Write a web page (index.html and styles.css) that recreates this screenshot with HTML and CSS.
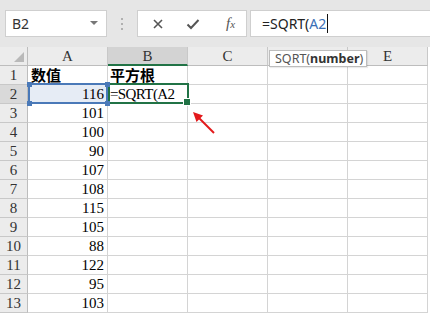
FILE: index.html
```html
<!DOCTYPE html>
<html lang="zh-CN">
<head>
  <meta charset="UTF-8">
  <title>SQRT</title>
  <link rel="stylesheet" href="styles.css">
</head>
<body>

  <div class="formula-bar">
    <div class="name-box">
      <span>B2</span>
      <span class="caret"></span>
    </div>
    <div class="grip"><i></i><i></i><i></i></div>
    <div class="btn-box">
      <svg class="icon" width="12" height="12" viewBox="0 0 12 12"><path d="M2 2 L10 10 M10 2 L2 10" stroke="#555" stroke-width="1.6" fill="none"/></svg>
      <svg class="icon" width="14" height="12" viewBox="0 0 14 12"><path d="M1.5 6.5 L5 10 L12.5 2" stroke="#555" stroke-width="2" fill="none"/></svg>
      <span class="fx">f<small>x</small></span>
    </div>
    <div class="formula-input">=SQRT(<span class="ref-text">A2</span><span class="cursor"></span></div>
  </div>

  <div class="sheet">
    <div class="corner"><span></span></div>
    <div class="col-hdr">A</div><div class="col-hdr active">B</div><div class="col-hdr">C</div><div class="col-hdr"></div><div class="col-hdr">E</div>

    <div class="row-hdr">1</div><div class="cell title">数值</div><div class="cell title left">平方根</div><div class="cell"></div><div class="cell"></div><div class="cell"></div>
    <div class="row-hdr active">2</div><div class="cell num ref">116<i class="h tl"></i><i class="h tr"></i><i class="h bl"></i><i class="h br"></i></div><div class="cell left editing">=SQRT(A2</div><div class="cell"></div><div class="cell"></div><div class="cell"></div>
    <div class="row-hdr">3</div><div class="cell num">101</div><div class="cell"></div><div class="cell"></div><div class="cell"></div><div class="cell"></div>
    <div class="row-hdr">4</div><div class="cell num">100</div><div class="cell"></div><div class="cell"></div><div class="cell"></div><div class="cell"></div>
    <div class="row-hdr">5</div><div class="cell num">90</div><div class="cell"></div><div class="cell"></div><div class="cell"></div><div class="cell"></div>
    <div class="row-hdr">6</div><div class="cell num">107</div><div class="cell"></div><div class="cell"></div><div class="cell"></div><div class="cell"></div>
    <div class="row-hdr">7</div><div class="cell num">108</div><div class="cell"></div><div class="cell"></div><div class="cell"></div><div class="cell"></div>
    <div class="row-hdr">8</div><div class="cell num">115</div><div class="cell"></div><div class="cell"></div><div class="cell"></div><div class="cell"></div>
    <div class="row-hdr">9</div><div class="cell num">105</div><div class="cell"></div><div class="cell"></div><div class="cell"></div><div class="cell"></div>
    <div class="row-hdr">10</div><div class="cell num">88</div><div class="cell"></div><div class="cell"></div><div class="cell"></div><div class="cell"></div>
    <div class="row-hdr">11</div><div class="cell num">122</div><div class="cell"></div><div class="cell"></div><div class="cell"></div><div class="cell"></div>
    <div class="row-hdr">12</div><div class="cell num">95</div><div class="cell"></div><div class="cell"></div><div class="cell"></div><div class="cell"></div>
    <div class="row-hdr">13</div><div class="cell num">103</div><div class="cell"></div><div class="cell"></div><div class="cell"></div><div class="cell"></div>

    <div class="tooltip">SQRT(<b>number</b>)</div>

    <svg class="arrow" width="30" height="30" viewBox="0 0 30 30">
      <path d="M25 26 L9 10" stroke="#e3191b" stroke-width="2" fill="none"/>
      <path d="M4 5 L14 8.5 L7.5 15 Z" fill="#e3191b"/>
    </svg>
  </div>

</body>
</html>
```

FILE: styles.css
```css
* {
  box-sizing: border-box;
}

body {
  margin: 0;
  width: 430px;
  height: 314px;
  overflow: hidden;
  background: white;
  font-family: "Noto Sans", "Noto Sans CJK SC", sans-serif;
}

/* formula bar */

.formula-bar {
  height: 47px;
  background: #e6e6e6;
  display: flex;
  align-items: flex-start;
  padding: 10px 0 0 5px;
}

.name-box {
  width: 102px;
  height: 27px;
  background: white;
  border: 1px solid #cfcfcf;
  display: flex;
  align-items: center;
  justify-content: space-between;
  padding: 0 8px 0 6px;
  font-size: 14px;
  color: #333;
}

.caret {
  width: 0;
  height: 0;
  border-left: 4px solid transparent;
  border-right: 4px solid transparent;
  border-top: 4px solid #777;
  margin-top: -2px;
}

.grip {
  width: 30px;
  height: 27px;
  display: flex;
  flex-direction: column;
  align-items: center;
  justify-content: center;
  gap: 3px;
}

.grip i {
  width: 2px;
  height: 2px;
  background: #b0b0b0;
}

.btn-box {
  width: 110px;
  height: 27px;
  background: white;
  border: 1px solid #cfcfcf;
  display: flex;
  align-items: center;
  padding: 0 0 0 14px;
  gap: 22px;
}

.fx {
  font-family: "Liberation Serif", serif;
  font-style: italic;
  font-size: 15px;
  color: #555;
  margin-left: 4px;
}

.fx small {
  font-size: 11px;
}

.formula-input {
  flex: 1;
  height: 27px;
  margin-left: 3px;
  background: white;
  border: 1px solid #cfcfcf;
  border-right: none;
  padding-left: 11px;
  font-size: 14px;
  line-height: 25px;
  color: #222;
  display: flex;
  align-items: center;
}

.ref-text {
  color: #3b6fb6;
}

.cursor {
  width: 1px;
  height: 19px;
  background: #111;
  margin-left: 1px;
}

/* sheet */

.sheet {
  position: relative;
  display: grid;
  grid-template-columns: 28px repeat(5, 80px);
  grid-auto-rows: 19px;
  font-family: "Liberation Serif", "Noto Sans CJK SC", serif;
  font-size: 15px;
}

.sheet > div {
  border-right: 1px solid #d4d4d4;
  border-bottom: 1px solid #d4d4d4;
}

.corner {
  background: #ececec;
  border-color: #bdbdbd !important;
  position: relative;
}

.corner span {
  position: absolute;
  right: 3px;
  bottom: 3px;
  width: 0;
  height: 0;
  border-left: 10px solid transparent;
  border-bottom: 10px solid #b9b9b9;
}

.col-hdr {
  background: #ececec;
  text-align: center;
  line-height: 19px;
  color: #333;
  border-right-color: #c8c8c8 !important;
  border-bottom-color: #bdbdbd !important;
}

.col-hdr.active {
  background: #d3d3d3;
  border-bottom: 2px solid #217346 !important;
  color: #333;
  line-height: 18px;
}

.row-hdr {
  background: #ececec;
  text-align: center;
  line-height: 19px;
  color: #333;
  border-right-color: #bdbdbd !important;
  border-bottom-color: #c8c8c8 !important;
}

.row-hdr.active {
  background: #d9d9d9;
}

.cell {
  line-height: 19px;
  color: #000;
  white-space: nowrap;
}

.num {
  text-align: right;
  padding-right: 3px;
}

.title {
  font-family: "Noto Sans CJK SC", sans-serif;
  font-weight: bold;
  font-size: 15px;
  line-height: 18px;
  padding-left: 3px;
}

.left {
  padding-left: 2px;
}

.ref {
  position: relative;
  background: #e6ecf5;
}

.ref::after {
  content: "";
  position: absolute;
  left: 0;
  top: -2px;
  right: -1px;
  bottom: -1px;
  border: 2px solid #4a79b8;
}

.h {
  position: absolute;
  width: 5px;
  height: 5px;
  background: #4a79b8;
  z-index: 1;
}

.tl { left: -1px; top: -3px; }
.tr { right: -3px; top: -3px; }
.bl { left: -1px; bottom: -3px; }
.br { right: -3px; bottom: -3px; }

.editing {
  position: relative;
  overflow: visible;
  letter-spacing: -0.6px;
}

.editing::after {
  content: "";
  position: absolute;
  left: 0;
  top: -2px;
  right: -2px;
  bottom: -1px;
  border: 2px solid #217346;
}

.editing::before {
  content: "";
  position: absolute;
  right: -4px;
  bottom: -3px;
  width: 6px;
  height: 6px;
  background: #217346;
  border: 1px solid white;
  z-index: 1;
}

.tooltip {
  position: absolute;
  left: 269px;
  top: 3px;
  width: 98px;
  height: 17px;
  background: white;
  border: 1px solid #bdbdbd !important;
  font-family: "Noto Sans", sans-serif;
  font-size: 12.5px;
  line-height: 15px;
  color: #555;
  padding-left: 5px;
  box-shadow: 1px 1px 1px rgba(0, 0, 0, 0.08);
}

.tooltip b {
  color: #333;
}

.arrow {
  position: absolute;
  left: 189px;
  top: 60px;
}
```
